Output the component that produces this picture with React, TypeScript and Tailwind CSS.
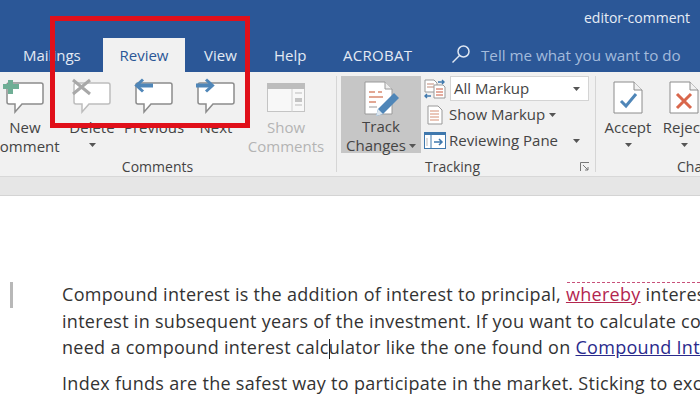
const Caret = ({ className = 'text-[#555]' }: { className?: string }) => (
  <svg width="7" height="4" viewBox="0 0 7 4" className={className}>
    <path d="M0 0h7L3.5 4z" fill="currentColor" />
  </svg>
)

const Bubble = ({ stroke = '#8c8c8c' }: { stroke?: string }) => (
  <path d="M3 6h32a2 2 0 0 1 2 2v17a2 2 0 0 1-2 2H16l-7 8v-8H3a2 2 0 0 1-2-2V8a2 2 0 0 1 2-2z" fill="#fff" stroke={stroke} strokeWidth="1.5" />
)

const NewIcon = () => (
  <svg width="38" height="41" viewBox="0 0 38 41" className="overflow-visible">
    <Bubble />
    <path d="M2 3h5v4h6v5H7v5H2v-5h-5V7h5z" fill="#6fae95" />
  </svg>
)

const DeleteIcon = () => (
  <svg width="38" height="41" viewBox="0 0 38 41" className="overflow-visible">
    <Bubble stroke="#bdbdbd" />
    <path d="M0 3l17 14M17 3L0 17" stroke="#a8a8a8" strokeWidth="3" fill="none" />
  </svg>
)

const PrevIcon = () => (
  <svg width="38" height="41" viewBox="0 0 38 41" className="overflow-visible">
    <Bubble />
    <path d="M18 8.500H2" stroke="#4f86b8" strokeWidth="4" fill="none" />
    <path d="M8 2.500L1.500 8.500 8 14.500" stroke="#4f86b8" strokeWidth="3" fill="none" />
  </svg>
)

const NextIcon = () => (
  <svg width="38" height="41" viewBox="0 0 38 41" className="overflow-visible">
    <Bubble />
    <path d="M-1 8.500h16" stroke="#4f86b8" strokeWidth="4" fill="none" />
    <path d="M9 2.500l6.500 6L9 14.500" stroke="#4f86b8" strokeWidth="3" fill="none" />
  </svg>
)

const ShowCommentsIcon = () => (
  <svg width="38" height="30" viewBox="0 0 38 30">
    <rect x="0.5" y="0.5" width="37" height="28" fill="#f8f8f8" stroke="#c4c4c4" />
    <rect x="0" y="0" width="38" height="6" fill="#bdbdbd" />
    <path d="M25 6v23" stroke="#d0d0d0" />
    <path d="M28 10h7M28 22h7" stroke="#bbb" />
    <rect x="28" y="15" width="7" height="4" fill="#c4c4c4" />
  </svg>
)

const TrackIcon = () => (
  <svg width="38" height="36" viewBox="0 0 38 36">
    <path d="M1 1h20l7 7v25H1z" fill="#fff" stroke="#9a9a9a" />
    <path d="M21 1v7h7" fill="#eee" stroke="#9a9a9a" />
    <path d="M5 11h6M5 16h14M5 21h7M14 11h4" stroke="#d98a70" strokeWidth="1.5" />
    <path d="M5 26h8" stroke="#bbb" strokeWidth="1.5" />
    <path d="M12 35l2-7 16-16 5 5-16 16z" fill="#4f86b8" />
    <path d="M12 35l2-7 5 5z" fill="#dbe6ef" />
  </svg>
)

const CompareIcon = () => (
  <svg width="22" height="20" viewBox="0 0 22 20">
    <path d="M1 1h9l3 3v9H1z" fill="#fff" stroke="#999" />
    <path d="M3 5h7M3 8h7" stroke="#c08a78" />
    <path d="M10 6h9l2 2v11H10z" fill="#fff" stroke="#999" />
    <path d="M12 10h7M12 13h7M12 16h7" stroke="#c8583f" />
    <path d="M14 3h6M18 1l2 2-2 2M1 17h6M3 15l-2 2 2 2" stroke="#3f78ad" strokeWidth="1.4" fill="none" />
  </svg>
)

const ShowMarkupIcon = () => (
  <svg width="16" height="20" viewBox="0 0 16 20">
    <path d="M1 1h10l4 4v14H1z" fill="#fff" stroke="#999" />
    <path d="M3 6h9M3 9h9M3 12h9M3 15h9" stroke="#d58f74" />
  </svg>
)

const PaneIcon = () => (
  <svg width="22" height="17" viewBox="0 0 22 17">
    <rect x="0.5" y="0.5" width="21" height="16" fill="#fff" stroke="#3f78ad" />
    <rect x="0" y="0" width="22" height="3" fill="#3f78ad" />
    <path d="M7 3v14" stroke="#3f78ad" />
    <path d="M3 6v8" stroke="#bbb" />
    <path d="M10 10h8M15 7l3 3-3 3" stroke="#3f78ad" strokeWidth="1.5" fill="none" />
  </svg>
)

const DocIcon = ({ children }: { children: React.ReactNode }) => (
  <svg width="30" height="33" viewBox="0 0 30 33">
    <path d="M1 1h20l8 8v23H1z" fill="#fff" stroke="#8c8c8c" />
    <path d="M21 1v8h8" fill="#f1f1f1" stroke="#8c8c8c" />
    {children}
  </svg>
)

const RibbonButton = ({ icon, lines, width, muted, caret }: { icon: React.ReactNode; lines: string[]; width: string; muted?: boolean; caret?: boolean }) => (
  <div className={`${width} shrink-0 flex flex-col items-center pt-[5px]`}>
    <div className="h-[41px] flex items-start justify-center">{icon}</div>
    <div className={`flex flex-col items-center text-[15px] leading-[19px] whitespace-nowrap ${muted ? 'text-[#b4b4b4]' : 'text-[#444]'}`}>
      {lines.map(l => <span key={l}>{l}</span>)}
    </div>
    {caret && <div className="mt-[6px]"><Caret /></div>}
  </div>
)

export default function App() {
  return (
    <div className="relative w-[700px] h-[400px] overflow-hidden bg-white font-['Open_Sans',sans-serif]">
      {/* title bar and tabs */}
      <div className="h-[72px] bg-[#2b5797] flex flex-col">
        <div className="h-[38px] pl-[584px] pt-[8px] text-[14px] leading-5 text-[#e6ecf5] whitespace-nowrap">editor-comment</div>
        <div className="h-[34px] flex items-stretch text-[15px] text-[#e3eaf4] whitespace-nowrap">
          <div className="w-[103px] pl-[23px] pt-[6px]">Mailings</div>
          <div className="w-[82px] bg-[#f1f1f1] text-[#2b5797] text-center pt-[6px]">Review</div>
          <div className="w-[89px] pl-[19px] pt-[6px]">View</div>
          <div className="w-[69px] pt-[6px]">Help</div>
          <div className="w-[108px] pt-[6px] tracking-[0.3px]">ACROBAT</div>
          <div className="pt-[6px] mr-[10px]">
            <svg width="20" height="20" viewBox="0 0 20 20" fill="none" stroke="#dfe7f2" strokeWidth="1.5">
              <circle cx="12.500" cy="7.500" r="5.500" />
              <path d="M8.500 11.500L1.500 18.500" />
            </svg>
          </div>
          <div className="pt-[6px] text-[#a3bbdc] text-[15.2px]">Tell me what you want to do</div>
        </div>
      </div>

      {/* ribbon */}
      <div className="h-[105px] bg-[#f1f1f1] border-b border-[#d8d8d8] flex overflow-hidden">
        <div className="shrink-0 w-[348px] -ml-[12px] flex flex-col">
          <div className="h-[86px] flex">
            <RibbonButton icon={<NewIcon />} lines={['New', 'Comment']} width="w-[74px]" />
            <RibbonButton icon={<DeleteIcon />} lines={['Delete']} width="w-[60px]" caret />
            <RibbonButton icon={<PrevIcon />} lines={['Previous']} width="w-[64px]" />
            <RibbonButton icon={<NextIcon />} lines={['Next']} width="w-[60px]" />
            <RibbonButton icon={<div className="pt-[6px]"><ShowCommentsIcon /></div>} lines={['Show', 'Comments']} width="w-[80px]" muted />
          </div>
          <div className="text-[14px] leading-4 text-[#444] text-center w-[339px] mt-[1px]">Comments</div>
        </div>
        <div className="w-px h-[96px] mt-[4px] bg-[#d6d6d6] shrink-0" />
        <div className="w-[258px] shrink-0 flex flex-col pl-[4px]">
          <div className="flex h-[81px] pt-[4px]">
            <div className="w-[80px] h-[77px] bg-[#c6c6c6] flex flex-col items-center pt-[5px] text-[15px] leading-[19px] text-[#444]">
              <div className="h-[37px] pl-[4px]"><TrackIcon /></div>
              <span>Track</span>
              <span className="flex items-center gap-[3px]">Changes <Caret /></span>
            </div>
            <div className="flex flex-col pl-[3px] text-[15px] text-[#444]">
              <div className="flex items-center h-[26px]">
                <CompareIcon />
                <div className="ml-[4px] w-[139px] h-[25px] bg-white border border-[#d4d4d4] flex items-center justify-between px-[3px] pr-[8px]">
                  All Markup <Caret />
                </div>
              </div>
              <div className="flex items-center h-[26px] pl-[3px] mt-[1px]">
                <ShowMarkupIcon />
                <span className="ml-[6px]">Show Markup</span>
                <Caret className="ml-[4px] text-[#555]" />
              </div>
              <div className="flex items-center h-[26px] mt-[1px]">
                <PaneIcon />
                <span className="ml-[3px]">Reviewing Pane</span>
                <Caret className="ml-[15px] text-[#555]" />
              </div>
            </div>
          </div>
          <div className="flex justify-between items-center mt-[6px] pl-[84px] pr-[5px] text-[14px] leading-4 text-[#444]">
            <span>Tracking</span>
            <svg width="10" height="10" viewBox="0 0 10 10" fill="none" stroke="#777">
              <path d="M0.500 9V0.500H9" />
              <path d="M3 3l5 5M8 5v3H5" />
            </svg>
          </div>
        </div>
        <div className="w-px h-[96px] mt-[4px] bg-[#d6d6d6] shrink-0" />
        <div className="flex flex-col shrink-0">
          <div className="flex h-[86px]">
            <div className="w-[56px] ml-[4px] flex flex-col items-center pt-[9px]">
              <DocIcon><path d="M8 20l5 5 10-12" stroke="#4f86b8" strokeWidth="3" fill="none" /></DocIcon>
              <span className="mt-[4px] text-[15px] leading-[19px] text-[#444]">Accept</span>
              <div className="mt-[6px]"><Caret /></div>
            </div>
            <div className="w-[56px] flex flex-col items-center pt-[9px]">
              <DocIcon><path d="M8 13l14 14M22 13L8 27" stroke="#d9674c" strokeWidth="3" fill="none" /></DocIcon>
              <span className="mt-[4px] text-[15px] leading-[19px] text-[#444]">Reject</span>
              <div className="mt-[6px]"><Caret /></div>
            </div>
          </div>
          <div className="pl-[81px] mt-[1px] text-[14px] leading-4 text-[#444]">Changes</div>
        </div>
      </div>

      {/* ruler band */}
      <div className="h-[19px] bg-[#e6e6e6] border-b border-[#d4d4d4]" />

      {/* document */}
      <div className="relative pl-[62px] pt-[85px] whitespace-nowrap text-[18px] tracking-[0.29px] text-[#333]">
        <div className="absolute left-[10px] top-[86px] w-[3px] h-[26px] bg-[#b8b8b8]" />
        <div className="absolute left-[567px] top-[86px] w-[133px] border-t border-dashed border-[#c8517a]" />
        <p className="h-[27px] leading-[27px]">
          Compound interest is the addition of interest to principal,{' '}
          <span className="text-[#b3264f] underline">whereby</span> interest is added
        </p>
        <p className="h-[26px] leading-[26px]">interest in subsequent years of the investment. If you want to calculate compound</p>
        <p className="h-[26px] leading-[26px]">
          need a compound interest calc<span className="inline-block w-px h-[20px] -mr-px align-middle bg-[#222]" />ulator like the one found on{' '}
          <span className="text-[#2a2a8c] underline">Compound Interest</span>
        </p>
        <p className="mt-[10px] h-[26px] leading-[26px]">Index funds are the safest way to participate in the market. Sticking to exchange</p>
      </div>

      {/* red highlight box */}
      <div className="absolute left-[50px] top-[16px] w-[200px] h-[112px] border-[5px] border-[#e0101a]" />
    </div>
  )
}
